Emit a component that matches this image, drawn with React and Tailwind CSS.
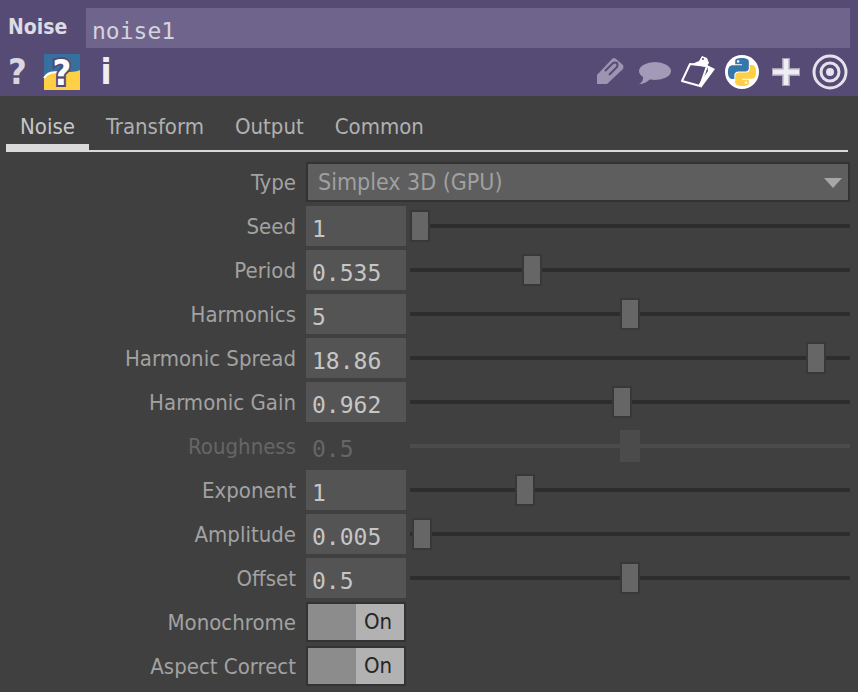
import React, { useState } from "react";

const PARAMS = [
  { id: "seed", label: "Seed", value: "1", min: 1, max: 1000 },
  { id: "period", label: "Period", value: "0.535", min: 0, max: 2 },
  { id: "harmonics", label: "Harmonics", value: "5", min: 0, max: 10 },
  { id: "spread", label: "Harmonic Spread", value: "18.86", min: 0, max: 20 },
  { id: "gain", label: "Harmonic Gain", value: "0.962", min: 0, max: 2 },
  { id: "rough", label: "Roughness", value: "0.5", min: 0, max: 1, disabled: true },
  { id: "exp", label: "Exponent", value: "1", min: 0, max: 4 },
  { id: "amp", label: "Amplitude", value: "0.005", min: 0, max: 1 },
  { id: "offset", label: "Offset", value: "0.5", min: 0, max: 1 },
];

const TABS = ["Noise", "Transform", "Output", "Common"];

const PYTHON_SNAKE =
  "M14.25.18l.9.2.73.26.59.3.45.32.34.34.25.34.16.33.1.3.04.26.02.2-.01.13V8.5l-.05.63-.13.55-.21.46-.26.38-.3.31-.33.25-.35.19-.35.14-.33.1-.3.07-.26.04-.21.02H8.77l-.69.05-.59.14-.5.22-.41.27-.33.32-.27.35-.2.36-.15.37-.1.35-.07.32-.04.27-.02.21v3.06H3.17l-.21-.03-.28-.07-.32-.12-.35-.18-.36-.26-.36-.36-.35-.46-.32-.59-.28-.73-.21-.88-.14-1.05-.05-1.23.06-1.22.16-1.04.24-.87.32-.71.36-.57.4-.44.42-.33.42-.24.4-.16.36-.1.32-.05.24-.01h.16l.06.01h8.16v-.83H6.18l-.01-2.75-.02-.37.05-.34.11-.31.17-.28.25-.26.31-.23.38-.2.44-.18.51-.15.58-.12.64-.1.71-.06.77-.04.84-.02 1.27.05zm-6.3 1.98l-.23.33-.08.41.08.41.23.34.33.22.41.09.41-.09.33-.22.23-.34.08-.41-.08-.41-.23-.33-.33-.22-.41-.09-.41.09z";

const IconButton = ({ label, children }) => (
  <button type="button" aria-label={label} className="size-9 shrink-0">
    <svg viewBox="0 0 36 36" className="size-9 overflow-visible">
      {children}
    </svg>
  </button>
);

const Row = ({ id, label, disabled, children }) => (
  <div className="flex h-10 items-center gap-[10px]">
    <label
      htmlFor={id}
      className={`w-[290px] shrink-0 pt-0.5 text-right text-[22px] leading-10 ${disabled ? "text-[#666666]" : "text-[#a2a2a2]"}`}
    >
      {label}
    </label>
    <div className="flex h-10 min-w-0 flex-1 items-center gap-1">{children}</div>
  </div>
);

const NumberParam = ({ id, label, value, min, max, disabled }) => {
  const [val, setVal] = useState(value);

  return (
    <Row id={id} label={label} disabled={disabled}>
      <input
        id={id}
        type="text"
        value={val}
        disabled={disabled}
        onChange={(e) => setVal(e.target.value)}
        className="h-10 w-[100px] shrink-0 bg-[#545454] px-1.5 pt-1.5 font-['DejaVu_Sans_Mono',monospace] text-[23px] text-[#c6c6c6] outline-none disabled:bg-transparent disabled:text-[#666666]"
      />
      <input
        type="range"
        aria-label={`${label} slider`}
        min={min}
        max={max}
        step="any"
        value={Number(val) || 0}
        disabled={disabled}
        onChange={(e) => setVal(String(Number(Number(e.target.value).toFixed(3))))}
        className="h-8 min-w-0 flex-1 appearance-none bg-transparent [&::-webkit-slider-runnable-track]:h-1 [&::-webkit-slider-runnable-track]:bg-[#2d2d2d] [&::-webkit-slider-thumb]:-mt-3.5 [&::-webkit-slider-thumb]:h-8 [&::-webkit-slider-thumb]:w-5 [&::-webkit-slider-thumb]:appearance-none [&::-webkit-slider-thumb]:border-2 [&::-webkit-slider-thumb]:border-[#383838] [&::-webkit-slider-thumb]:bg-[#666666] disabled:[&::-webkit-slider-runnable-track]:bg-[#4b4b4b] disabled:[&::-webkit-slider-thumb]:border-[#4b4b4b] disabled:[&::-webkit-slider-thumb]:bg-[#4b4b4b]"
      />
    </Row>
  );
};

const ToggleParam = ({ id, label }) => {
  const [on, setOn] = useState(true);

  return (
    <Row id={id} label={label}>
      <button
        id={id}
        type="button"
        role="switch"
        aria-checked={on}
        onClick={() => setOn(!on)}
        className={`flex h-10 w-[100px] border-2 border-[#333333] bg-[#8c8c8c] ${on ? "justify-end" : "justify-start"}`}
      >
        <span className="h-9 w-12 bg-[#b2b2b2] pr-1 text-center text-[22px] leading-9 text-[#262626]">
          {on ? "On" : "Off"}
        </span>
      </button>
    </Row>
  );
};

const App = () => {
  const [name, setName] = useState("noise1");
  const [tab, setTab] = useState("Noise");

  return (
    <div className="min-h-screen bg-[#404040] font-['DejaVu_Sans_Condensed','DejaVu_Sans',sans-serif]">
      <header className="h-24 bg-[#564b75] pt-2 pr-2 pl-2">
        <div className="flex h-10 items-center">
          <label htmlFor="opname" className="w-[78px] shrink-0 text-[21px] font-bold text-[#dddbe3]">
            Noise
          </label>
          <input
            id="opname"
            type="text"
            value={name}
            onChange={(e) => setName(e.target.value)}
            className="h-10 min-w-0 flex-1 bg-[#6f648b] px-1.5 pt-1.5 font-['DejaVu_Sans_Mono',monospace] text-[23px] text-[#d6d3dd] outline-none"
          />
        </div>
        <div className="flex h-12 items-center justify-between pr-0.5">
          <div className="flex items-center gap-2">
            <button type="button" className="h-9 w-7 text-left text-[36px] leading-9 font-bold text-[#d9d6e0]">
              ?
            </button>
            <IconButton label="Python help">
              <rect width="36" height="36" fill="#35709f" />
              <path d="M0 36V24C4 18 10 18 18 18s14 0 18-2v20z" fill="#ffcf45" />
              <path d="M0 24C4 18 9 18 17 18" fill="none" stroke="#fff" strokeWidth="2" />
              <text
                x="18"
                y="31"
                textAnchor="middle"
                fontSize="36"
                fontWeight="bold"
                fill="#fff"
                stroke="#564b75"
                strokeWidth="4"
                paintOrder="stroke"
              >
                ?
              </text>
            </IconButton>
            <button type="button" className="h-9 w-9 text-center text-[36px] leading-9 font-bold text-[#eeedf2]">
              i
            </button>
          </div>
          <div className="flex items-center gap-2">
            <IconButton label="Edit">
              <path d="M5 30V21L20 5Q22 3 24 5L31 11Q32 13 31 15L15 30z" fill="#9c94b0" />
              <path
                d="M13 17L21 9Q23 8 25 9Q26 11 25 13L17 21"
                fill="none"
                stroke="#564b75"
                strokeWidth="2"
              />
            </IconButton>
            <IconButton label="Comment">
              <ellipse cx="19" cy="17" rx="16" ry="9" fill="#a29ab6" />
              <path d="M7 22Q8 27 3 30Q10 30 15 24z" fill="#a29ab6" />
            </IconButton>
            <IconButton label="Clipboard">
              <path d="M10 10L27 12L20 32L2 27z" fill="none" stroke="#fff" strokeWidth="2" strokeLinejoin="round" />
              <path d="M27 11L35 15L21 34L19 30L28 17z" fill="#fff" />
              <path d="M12 10L19 7L22 2L27 4L29 9L26 13z" fill="#fff" />
              <circle cx="23" cy="5" r="1" fill="#564b75" />
            </IconButton>
            <IconButton label="Python">
              <circle cx="18" cy="18" r="17" fill="#fff" />
              <g transform="translate(4 4) scale(1.170)">
                <path d={PYTHON_SNAKE} fill="#3776ab" />
                <path d={PYTHON_SNAKE} transform="rotate(180 12 12)" fill="#ffcf45" />
              </g>
            </IconButton>
            <IconButton label="Add">
              <path d="M4 18H32M18 4V32" stroke="#a9a2ba" strokeWidth="8" />
              <path d="M5 18H31M18 5V31" stroke="#eeedf2" strokeWidth="5" />
            </IconButton>
            <IconButton label="Target">
              <g fill="none" stroke="#e4e2ea" strokeWidth="3">
                <circle cx="18" cy="18" r="16" />
                <circle cx="18" cy="18" r="9" />
              </g>
              <circle cx="18" cy="18" r="4" fill="#e4e2ea" />
            </IconButton>
          </div>
        </div>
      </header>

      <nav className="mr-2.5 ml-1.5 flex h-14 items-stretch gap-[3px] border-b-2 border-[#dadada]" role="tablist">
        {TABS.map((t) => (
          <button
            key={t}
            type="button"
            role="tab"
            aria-selected={tab === t}
            onClick={() => setTab(t)}
            className={`border-b-6 px-3.5 pt-3 text-[22px] ${tab === t ? "border-[#dadada] text-[#c8c8c8]" : "border-transparent text-[#b0b0b0]"}`}
          >
            {t}
          </button>
        ))}
      </nav>

      <main className="flex flex-col gap-1 pt-2.5 pr-2 pb-1.5 pl-1.5">
        <Row id="type" label="Type">
          <div className="relative h-10 min-w-0 flex-1">
            <select
              id="type"
              className="h-10 w-full appearance-none border-2 border-[#333333] bg-[#5e5e5e] pl-2.5 text-[23px] text-[#a0a0a0] outline-none"
            >
              <option>Simplex 3D (GPU)</option>
              <option>Sparse</option>
              <option>Random (GPU)</option>
            </select>
            <svg viewBox="0 0 18 10" className="pointer-events-none absolute top-4 right-2 h-2.5 w-[18px]">
              <path d="M0 0H18L9 10z" fill="#a6a6a6" />
            </svg>
          </div>
        </Row>
        {PARAMS.map((p) => (
          <NumberParam key={p.id} {...p} />
        ))}
        <ToggleParam id="mono" label="Monochrome" />
        <ToggleParam id="aspect" label="Aspect Correct" />
      </main>
    </div>
  );
};

export default App;
